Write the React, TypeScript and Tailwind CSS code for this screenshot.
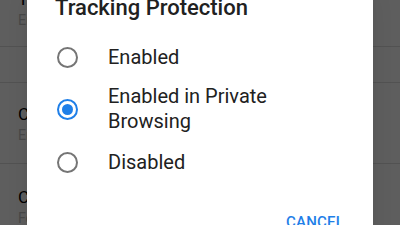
import React, { useState } from 'react';

// ── Settings list behind the dialog ─────────────────────────────────────────

const ROWS = [
  { title: 'Tracking Protection', summary: 'Enabled in Private Browsing', cls: 'mt-[-20px] h-[67px] pt-[8px]' },
  { title: '', summary: '', cls: 'h-[36px]' },
  { title: 'Cookies', summary: 'Enabled', cls: 'h-[81px] pt-[20px]' },
  { title: 'Clear private data on exit', summary: 'Forget everything when you quit', cls: 'h-[81px] pt-[22px]' },
];

const OPTIONS = [
  { id: 'enabled', label: 'Enabled', cls: 'h-[48px]' },
  { id: 'private', label: 'Enabled in Private Browsing', cls: 'h-[56px]' },
  { id: 'disabled', label: 'Disabled', cls: 'h-[50px]' },
];

function Radio({ checked }: { checked: boolean }) {
  return (
    <span
      className={`flex h-[21px] w-[21px] shrink-0 items-center justify-center rounded-full border-[2px] ${
        checked ? 'border-[#1f7fe8]' : 'border-[#757575]'
      }`}
    >
      {checked && <span className="h-[11px] w-[11px] rounded-full bg-[#1f7fe8]" />}
    </span>
  );
}

export default function App() {
  const [value, setValue] = useState('private');

  return (
    <div
      className="relative h-[225px] w-[400px] overflow-hidden bg-white"
      style={{ fontFamily: 'Roboto, "Noto Sans", Arial, sans-serif' }}
    >
      {/* Background preference rows */}
      <div className="flex flex-col">
        {ROWS.map((r, i) => (
          <div key={i} className={`flex flex-col border-b border-[#dedede] pl-[18px] ${r.cls}`}>
            {r.title && <div className="text-[17px] leading-[22px] text-black">{r.title}</div>}
            {r.summary && <div className="text-[14px] leading-[20px] text-[#c4c4c4]">{r.summary}</div>}
          </div>
        ))}
      </div>

      {/* Scrim */}
      <div className="absolute inset-0 bg-black/[0.63]" />

      {/* Dialog */}
      <div className="absolute left-[27px] right-[27px] top-[-28px] flex flex-col rounded-[2px] bg-white pt-[23px] shadow-xl">
        <h2 className="px-[28px] text-[22px] font-medium leading-[26px] text-[#212121]">Tracking Protection</h2>

        <div className="mt-[12px] flex flex-col">
          {OPTIONS.map((o) => (
            <button
              key={o.id}
              type="button"
              onClick={() => setValue(o.id)}
              className={`flex items-center gap-[30px] pl-[30px] pr-[40px] text-left ${o.cls}`}
            >
              <Radio checked={value === o.id} />
              <span className="text-[20px] leading-[25px] text-[#212121]">{o.label}</span>
            </button>
          ))}
        </div>

        <div className="flex justify-end px-[29px] pt-[25px] pb-[20px]">
          <button type="button" className="text-[15px] font-medium uppercase leading-[20px] tracking-[0.2px] text-[#1f7fe8]">
            Cancel
          </button>
        </div>
      </div>
    </div>
  );
}
